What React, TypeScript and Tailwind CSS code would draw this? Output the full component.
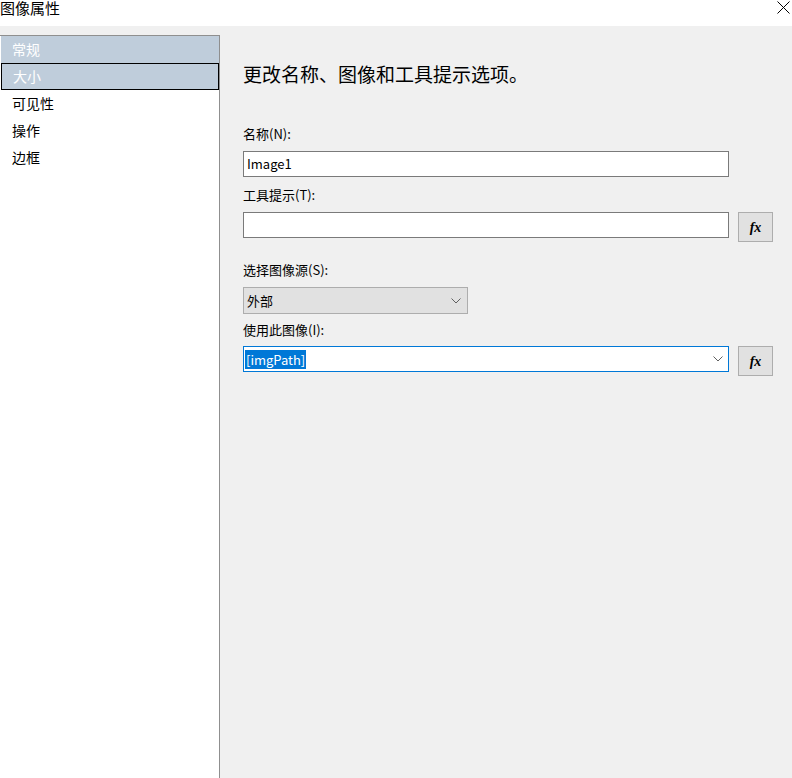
const navItems = ["常规", "大小", "可见性", "操作", "边框"];

function FxButton() {
  return (
    <button className="ml-[9px] flex h-[30px] w-[35px] flex-shrink-0 items-center justify-center border border-[#adadad] bg-[#e1e1e1] font-['Liberation_Serif',serif] text-[14px] font-bold italic text-black">
      fx
    </button>
  );
}

function Chevron() {
  return (
    <svg width="10" height="6" viewBox="0 0 10 6" className="text-[#606060]">
      <path d="M0.5 0.5L5 5L9.5 0.5" fill="none" stroke="currentColor" strokeWidth={1} />
    </svg>
  );
}

export default function App() {
  return (
    <div className="flex h-[778px] w-[792px] flex-col overflow-hidden bg-white font-['Noto_Sans_CJK_SC','Noto_Sans',sans-serif] text-black">
      <div className="flex h-[26px] flex-shrink-0 items-start justify-between bg-white">
        <span className="text-[15px] leading-[18px] -mt-px">图像属性</span>
        <svg width="13" height="13" viewBox="0 0 13 13" className="mr-[2px] mt-[1px]">
          <path d="M0.5 0.5L12.5 12.5M12.5 0.5L0.5 12.5" stroke="#000" strokeWidth={1} />
        </svg>
      </div>

      <div className="flex flex-1 bg-[#f0f0f0]">
        <div className="mt-[9px] w-[220px] flex-shrink-0 border-r border-t border-[#8f8f8f] bg-white pl-px">
          {navItems.map((item, i) => (
            <div
              key={item}
              className={
                "flex h-[27px] items-center pl-[11px] text-[14px] " +
                (i < 2 ? "bg-[#bfcddb] text-white " : "") +
                (i === 1 ? "border border-black pl-[10px]" : "")
              }
            >
              {item}
            </div>
          ))}
        </div>

        <div className="flex-1 pl-[23px] pt-[36px]">
          <h1 className="text-[19px] leading-[24px]">更改名称、图像和工具提示选项。</h1>

          <div className="mt-[39px] text-[13px] leading-[18px]">名称(N):</div>
          <div className="mt-[8px] flex h-[26px] w-[486px] items-center border border-[#7a7a7a] bg-white pl-[3px] text-[13px]">
            Image1
          </div>

          <div className="mt-[9px] text-[13px] leading-[18px]">工具提示(T):</div>
          <div className="mt-[8px] flex items-start">
            <div className="h-[26px] w-[486px] border border-[#7a7a7a] bg-white" />
            <FxButton />
          </div>

          <div className="mt-[19px] text-[13px] leading-[18px]">选择图像源(S):</div>
          <div className="mt-[8px] flex h-[27px] w-[225px] items-center justify-between border border-[#adadad] bg-[#e1e1e1] pl-[3px] pr-[6px] text-[13px]">
            <span>外部</span>
            <Chevron />
          </div>

          <div className="mt-[7px] text-[13px] leading-[18px]">使用此图像(I):</div>
          <div className="mt-[7px] flex items-start">
            <div className="flex h-[26px] w-[486px] items-center justify-between border border-[#0078d7] bg-white pl-px pr-[5px]">
              <span className="bg-[#0078d7] px-px text-[13px] leading-[19px] text-white">[imgPath]</span>
              <Chevron />
            </div>
            <FxButton />
          </div>
        </div>
      </div>
    </div>
  );
}
